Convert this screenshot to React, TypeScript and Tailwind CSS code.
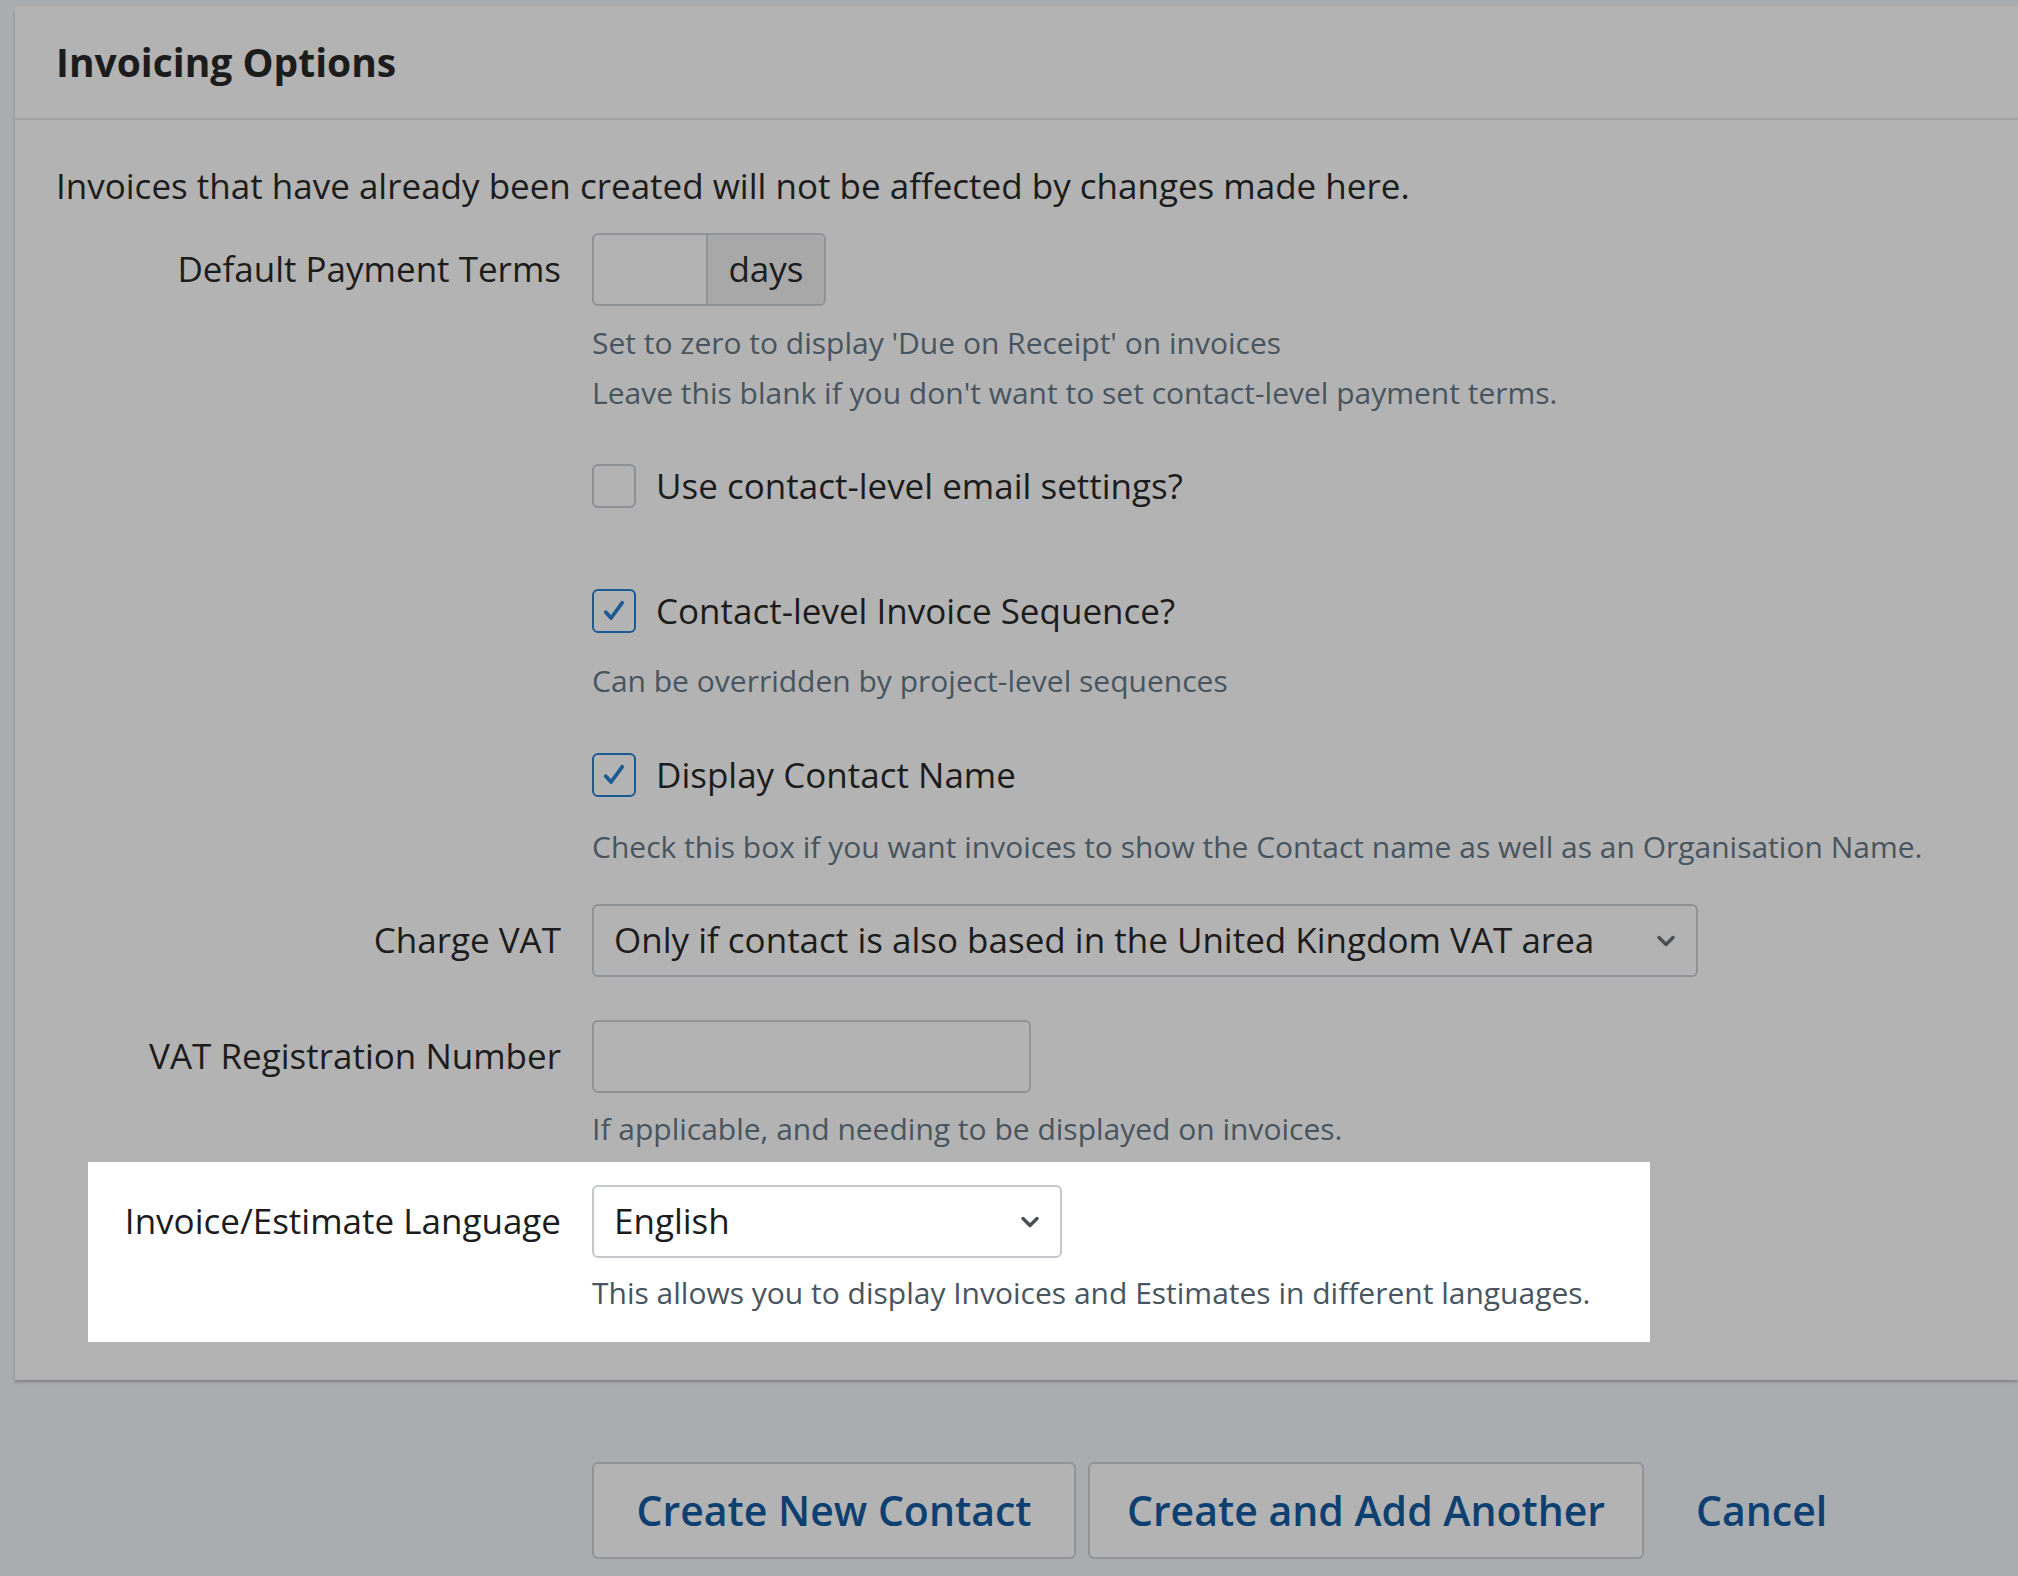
import { ChevronDown } from "lucide-react";

const font = { fontFamily: '"Open Sans", "Liberation Sans", sans-serif' };

const Check = ({ checked }: { checked?: boolean }) => (
  <span
    className={`flex h-[44px] w-[44px] items-center justify-center rounded-[6px] border-2 ${
      checked ? "border-[#1b5a92]" : "border-[#8b9196]"
    }`}
  >
    {checked && (
      <svg width="28" height="28" viewBox="0 0 24 24" fill="none">
        <path d="M5 13l4.5 5L19 5" stroke="#1b5a92" strokeWidth="3.2" strokeLinecap="round" strokeLinejoin="round" />
      </svg>
    )}
  </span>
);

const Help = ({ children, className = "" }: { children: React.ReactNode; className?: string }) => (
  <p className={`text-[30px] leading-[50px] text-[#48555f] ${className}`}>{children}</p>
);

const Label = ({ children }: { children: React.ReactNode }) => (
  <div className="w-[546px] shrink-0 text-right text-[35px] text-[#1c1c1c]">{children}</div>
);

export default function App() {
  return (
    <div className="h-[1576px] w-[2018px] overflow-hidden bg-[#a9adb0] pl-[15px] pt-[6px]" style={font}>
      <div className="h-[1374px] rounded-tl-[4px] bg-[#b3b3b3] shadow-[0_2px_3px_rgba(0,0,0,0.25)]">
        <div className="flex h-[114px] items-center border-b-2 border-[#a3a3a3] pl-[41px]">
          <h1 className="text-[39px] font-bold text-[#1c1c1c]">Invoicing Options</h1>
        </div>
        <div className="pl-[41px] pt-[40px]">
          <p className="text-[35px] text-[#1c1c1c]">Invoices that have already been created will not be affected by changes made here.</p>
        </div>

        <div className="mt-[20px] flex items-center gap-[31px]">
          <Label>Default Payment Terms</Label>
          <div className="flex h-[73px] w-[234px] overflow-hidden rounded-[6px] border-2 border-[#8e9398]">
            <div className="w-[114px] border-r-2 border-[#8e9398]" />
            <div className="flex flex-1 items-center justify-center bg-[#a8a8a8] text-[35px] text-[#1c1c1c]">days</div>
          </div>
        </div>
        <div className="ml-[577px] mt-[12px]">
          <Help>Set to zero to display 'Due on Receipt' on invoices</Help>
          <Help>Leave this blank if you don't want to set contact-level payment terms.</Help>
        </div>

        <div className="ml-[577px] mt-[42px] flex items-center gap-[20px] text-[35px] text-[#1c1c1c]">
          <Check /> Use contact-level email settings?
        </div>
        <div className="ml-[577px] mt-[73px] flex items-center gap-[20px] text-[35px] text-[#1c1c1c]">
          <Check checked /> Contact-level Invoice Sequence?
        </div>
        <Help className="ml-[577px] mt-[18px]">Can be overridden by project-level sequences</Help>
        <div className="ml-[577px] mt-[43px] flex items-center gap-[20px] text-[35px] text-[#1c1c1c]">
          <Check checked /> Display Contact Name
        </div>
        <Help className="ml-[577px] mt-[21px]">Check this box if you want invoices to show the Contact name as well as an Organisation Name.</Help>

        <div className="mt-[32px] flex items-center gap-[31px]">
          <Label>Charge VAT</Label>
          <div className="flex h-[73px] w-[1106px] items-center justify-between rounded-[6px] border-2 border-[#8e9398] pl-[20px] pr-[16px] text-[35px] text-[#1c1c1c]">
            Only if contact is also based in the United Kingdom VAT area
            <ChevronDown size={28} strokeWidth={3} className="text-[#4a4f54]" />
          </div>
        </div>

        <div className="mt-[43px] flex items-center gap-[31px]">
          <Label>VAT Registration Number</Label>
          <div className="h-[73px] w-[439px] rounded-[6px] border-2 border-[#8e9398]" />
        </div>
        <Help className="ml-[577px] mt-[11px]">If applicable, and needing to be displayed on invoices.</Help>

        <div className="ml-[73px] mt-[8px] w-[1562px] bg-white pb-[24px] pt-[23px]">
          <div className="flex items-center gap-[31px]">
            <div className="w-[473px] shrink-0 text-right text-[35px] text-[#1c1c1c]">Invoice/Estimate Language</div>
            <div className="flex h-[73px] w-[470px] items-center justify-between rounded-[6px] border-2 border-[#c4c8cc] pl-[20px] pr-[16px] text-[35px] text-[#1c1c1c]">
              English
              <ChevronDown size={28} strokeWidth={3} className="text-[#4a4f54]" />
            </div>
          </div>
          <Help className="ml-[504px] mt-[10px] text-[#5a6670]">This allows you to display Invoices and Estimates in different languages.</Help>
        </div>
      </div>

      <div className="ml-[577px] mt-[82px] flex items-center gap-[12px] text-[41px] font-semibold text-[#0d3f70]">
        <button className="h-[97px] w-[484px] rounded-[6px] border-2 border-[#8e9398] bg-[#b3b3b3]">Create New Contact</button>
        <button className="h-[97px] w-[556px] rounded-[6px] border-2 border-[#8e9398] bg-[#b3b3b3]">Create and Add Another</button>
        <button className="ml-[40px]">Cancel</button>
      </div>
    </div>
  );
}
